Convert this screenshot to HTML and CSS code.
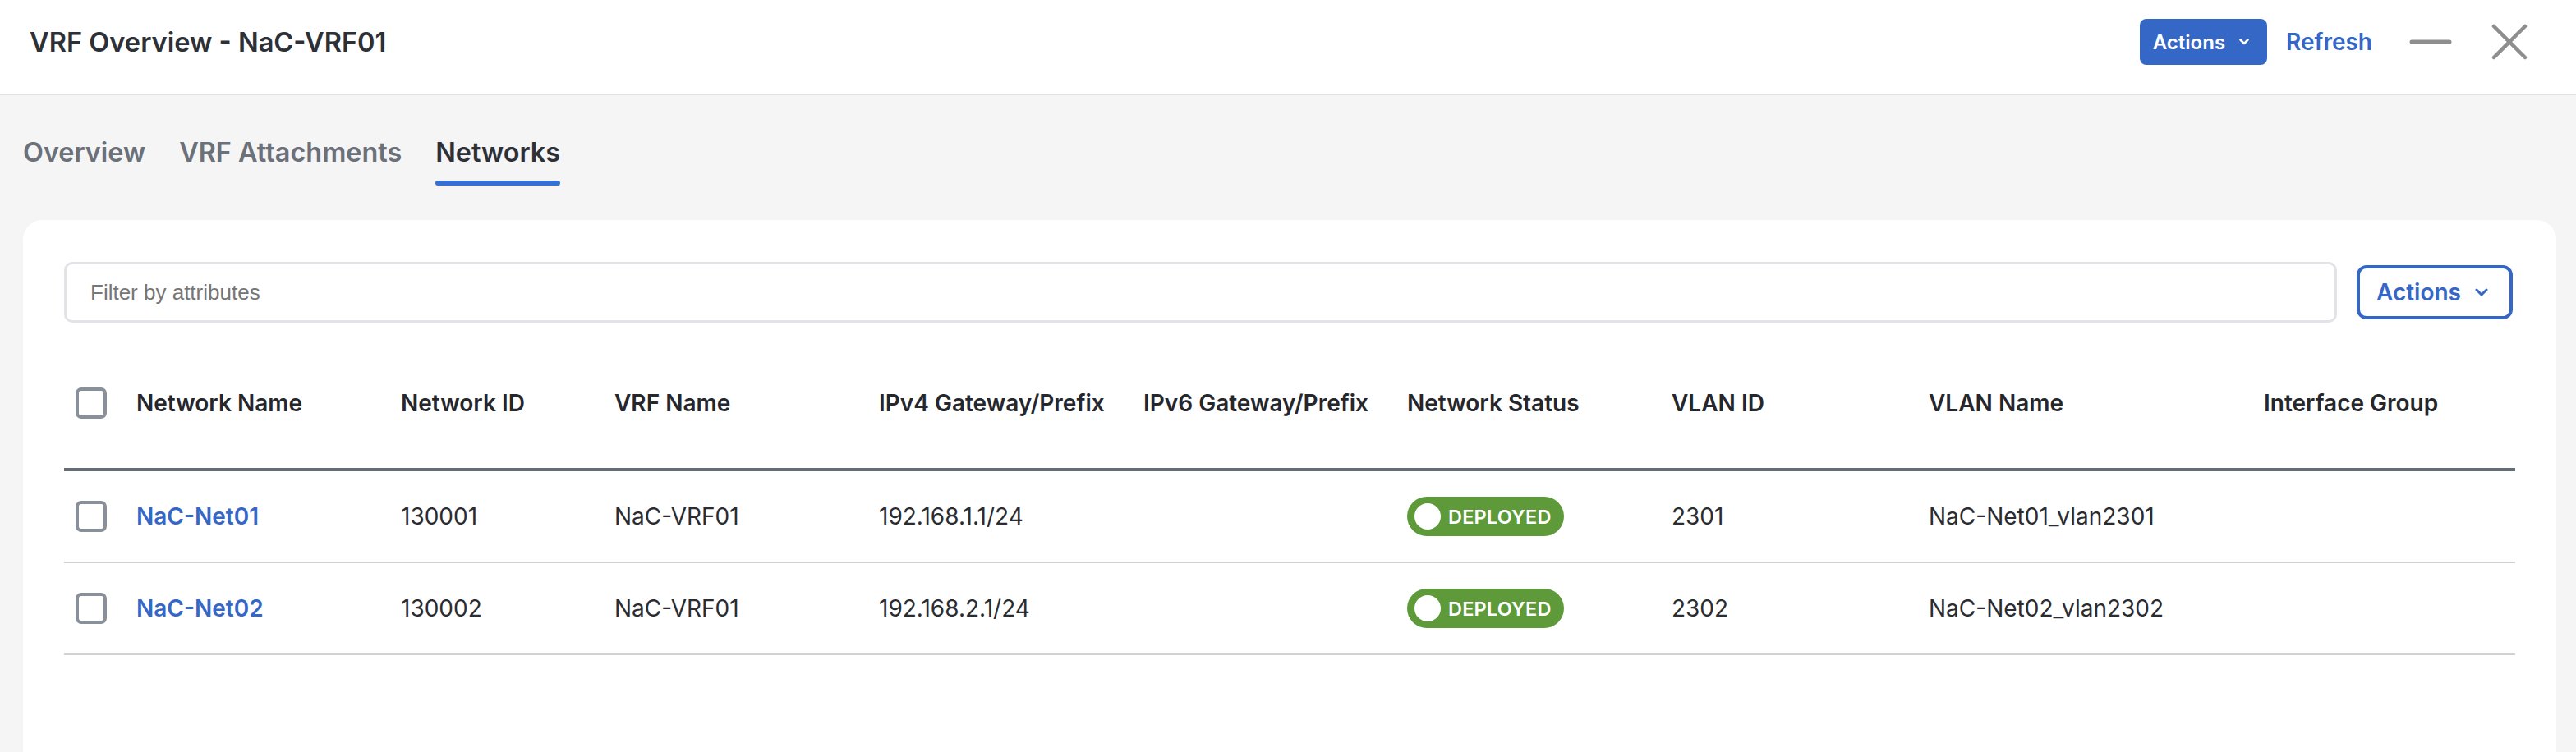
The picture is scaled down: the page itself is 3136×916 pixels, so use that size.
FILE: index.html
```html
<!DOCTYPE html>
<html lang="en">
<head>
  <meta charset="UTF-8" />
  <title>VRF Overview - NaC-VRF01</title>
  <link rel="stylesheet" href="styles.css">
</head>
<body>
<div class="modal">
  <header class="modal-header">
    <h1 class="modal-title">VRF Overview - NaC-VRF01</h1>
    <div class="header-actions">
      <button class="btn-primary">Actions
        <svg class="chevron" width="12" height="8" viewBox="0 0 12 8"><path d="M1.5 1.5 L6 6 L10.5 1.5" /></svg>
      </button>
      <button class="btn-link">Refresh</button>
      <button class="icon-btn minimize" aria-label="Minimize">
        <svg width="52" height="6" viewBox="0 0 52 6"><line x1="3" y1="3" x2="49" y2="3" /></svg>
      </button>
      <button class="icon-btn close" aria-label="Close">
        <svg width="44" height="44" viewBox="0 0 44 44"><line x1="3" y1="3" x2="41" y2="41" /><line x1="41" y1="3" x2="3" y2="41" /></svg>
      </button>
    </div>
  </header>

  <div class="modal-body">
    <!-- Tabs -->
    <nav class="tabs">
      <div class="tab">Overview</div>
      <div class="tab">VRF Attachments</div>
      <div class="tab active">Networks</div>
    </nav>

    <section class="card">
      <div class="toolbar">
        <input type="text" class="filter-input" placeholder="Filter by attributes" />
        <button class="btn-outline">Actions
          <svg class="chevron" width="16" height="10" viewBox="0 0 16 10"><path d="M2 2 L8 8 L14 2" /></svg>
        </button>
      </div>

      <!-- Networks table -->
      <div class="net-table">
        <div class="grid-row head-row">
          <div class="cell cell-check"><span class="checkbox"></span></div>
          <div class="cell">Network Name</div>
          <div class="cell">Network ID</div>
          <div class="cell">VRF Name</div>
          <div class="cell">IPv4 Gateway/Prefix</div>
          <div class="cell">IPv6 Gateway/Prefix</div>
          <div class="cell">Network Status</div>
          <div class="cell">VLAN ID</div>
          <div class="cell">VLAN Name</div>
          <div class="cell">Interface Group</div>
        </div>
        <div class="grid-row data-row">
          <div class="cell cell-check"><span class="checkbox"></span></div>
          <div class="cell"><a class="net-link" href="#">NaC-Net01</a></div>
          <div class="cell">130001</div>
          <div class="cell">NaC-VRF01</div>
          <div class="cell">192.168.1.1/24</div>
          <div class="cell"></div>
          <div class="cell"><span class="status-badge"><span class="status-dot"></span>DEPLOYED</span></div>
          <div class="cell">2301</div>
          <div class="cell">NaC-Net01_vlan2301</div>
          <div class="cell"></div>
        </div>
        <div class="grid-row data-row">
          <div class="cell cell-check"><span class="checkbox"></span></div>
          <div class="cell"><a class="net-link" href="#">NaC-Net02</a></div>
          <div class="cell">130002</div>
          <div class="cell">NaC-VRF01</div>
          <div class="cell">192.168.2.1/24</div>
          <div class="cell"></div>
          <div class="cell"><span class="status-badge"><span class="status-dot"></span>DEPLOYED</span></div>
          <div class="cell">2302</div>
          <div class="cell">NaC-Net02_vlan2302</div>
          <div class="cell"></div>
        </div>
      </div>
    </section>
  </div>
</div>
</body>
</html>
```

FILE: styles.css
```css
body, html {
  margin: 0;
  padding: 0;
  background: #f5f5f5;
  font-family: Inter, 'Noto Sans', sans-serif;
  color: #2a2c31;
}
button {
  font-family: inherit;
  cursor: pointer;
}
.modal-header {
  display: flex;
  align-items: center;
  justify-content: space-between;
  height: 116px;
  box-sizing: border-box;
  padding: 0 59px 12px 36px;
  background: #fff;
  border-bottom: 2px solid #e1e1e1;
}
.modal-title {
  margin: 0;
  font-size: 32.6px;
  font-weight: 600;
  color: #2d3036;
}
.header-actions {
  display: flex;
  align-items: center;
}
.btn-primary {
  display: inline-flex;
  align-items: center;
  gap: 17px;
  height: 56px;
  padding: 0 22px 0 16px;
  border: none;
  border-radius: 8px;
  background: #3567c6;
  color: #fff;
  font-size: 24px;
  font-weight: 600;
}
.btn-primary .chevron path {
  fill: none;
  stroke: #fff;
  stroke-width: 2.5;
  stroke-linecap: round;
  stroke-linejoin: round;
}
.btn-link {
  margin-left: 23px;
  padding: 0;
  border: none;
  background: none;
  color: #3567c6;
  font-size: 28px;
  font-weight: 600;
}
.icon-btn {
  display: flex;
  padding: 0;
  border: none;
  background: none;
}
.icon-btn line {
  stroke: #8e8e8e;
  stroke-linecap: round;
}
.minimize {
  margin-left: 45px;
}
.minimize line {
  stroke-width: 5;
}
.close {
  margin-left: 48px;
}
.close line {
  stroke-width: 4.5;
}

.tabs {
  display: flex;
  gap: 41px;
  padding: 50px 28px 0;
}
.tab {
  position: relative;
  padding-bottom: 20px;
  font-size: 32.4px;
  line-height: 40px;
  font-weight: 600;
  color: #6b7079;
}
.tab.active {
  color: #2d3036;
}
.tab.active::after {
  content: "";
  position: absolute;
  left: 0;
  right: 0;
  bottom: 0;
  height: 6px;
  border-radius: 3px;
  background: #3670d2;
}

.card {
  margin: 42px 24px 0 28px;
  padding: 51px 50px;
  min-height: 700px;
  background: #fff;
  border-radius: 24px 24px 0 0;
}
.toolbar {
  display: flex;
  align-items: center;
  gap: 24px;
}
.filter-input {
  flex: 1;
  height: 74px;
  box-sizing: border-box;
  padding: 0 29px;
  border: 3px solid #e2e3e7;
  border-radius: 10px;
  font-family: 'Liberation Sans', Arial, sans-serif;
  font-size: 26px;
  color: #333;
  outline: none;
}
.filter-input::placeholder {
  color: #767676;
}
.btn-outline {
  display: inline-flex;
  align-items: center;
  gap: 17px;
  height: 66px;
  margin-right: 3px;
  padding: 0 26px 0 20px;
  border: 4px solid #3567c6;
  border-radius: 12px;
  background: #fff;
  color: #3567c6;
  font-size: 28px;
  font-weight: 600;
}
.btn-outline .chevron path {
  fill: none;
  stroke: #3567c6;
  stroke-width: 3;
  stroke-linecap: round;
  stroke-linejoin: round;
}

.net-table {
  margin-top: 19px;
}
.grid-row {
  display: grid;
  grid-template-columns: 72px 322px 260px 322px 322px 321px 322px 313px 408px 1fr;
  align-items: center;
  font-size: 28px;
}
.head-row {
  height: 158px;
  border-bottom: 4px solid #656c76;
  font-weight: 600;
  color: #25272c;
}
.data-row {
  height: 110px;
  border-bottom: 2px solid #d1d1d3;
  color: #2a2c31;
}
.cell {
  padding-left: 16px;
  white-space: nowrap;
}
.cell-check {
  display: flex;
  padding-left: 14px;
}
.checkbox {
  width: 38px;
  height: 38px;
  box-sizing: border-box;
  border: 4px solid #8a9099;
  border-radius: 7px;
}
.net-link {
  color: #3567c9;
  font-weight: 600;
  text-decoration: none;
}
.status-badge {
  display: inline-flex;
  align-items: center;
  gap: 9px;
  height: 48px;
  padding: 0 15px 0 9px;
  border-radius: 24px;
  background: #5e9a39;
  color: #fff;
  font-size: 23.5px;
  font-weight: 600;
  letter-spacing: 0.2px;
}
.status-dot {
  width: 32px;
  height: 32px;
  border-radius: 50%;
  background: #fff;
}
```
